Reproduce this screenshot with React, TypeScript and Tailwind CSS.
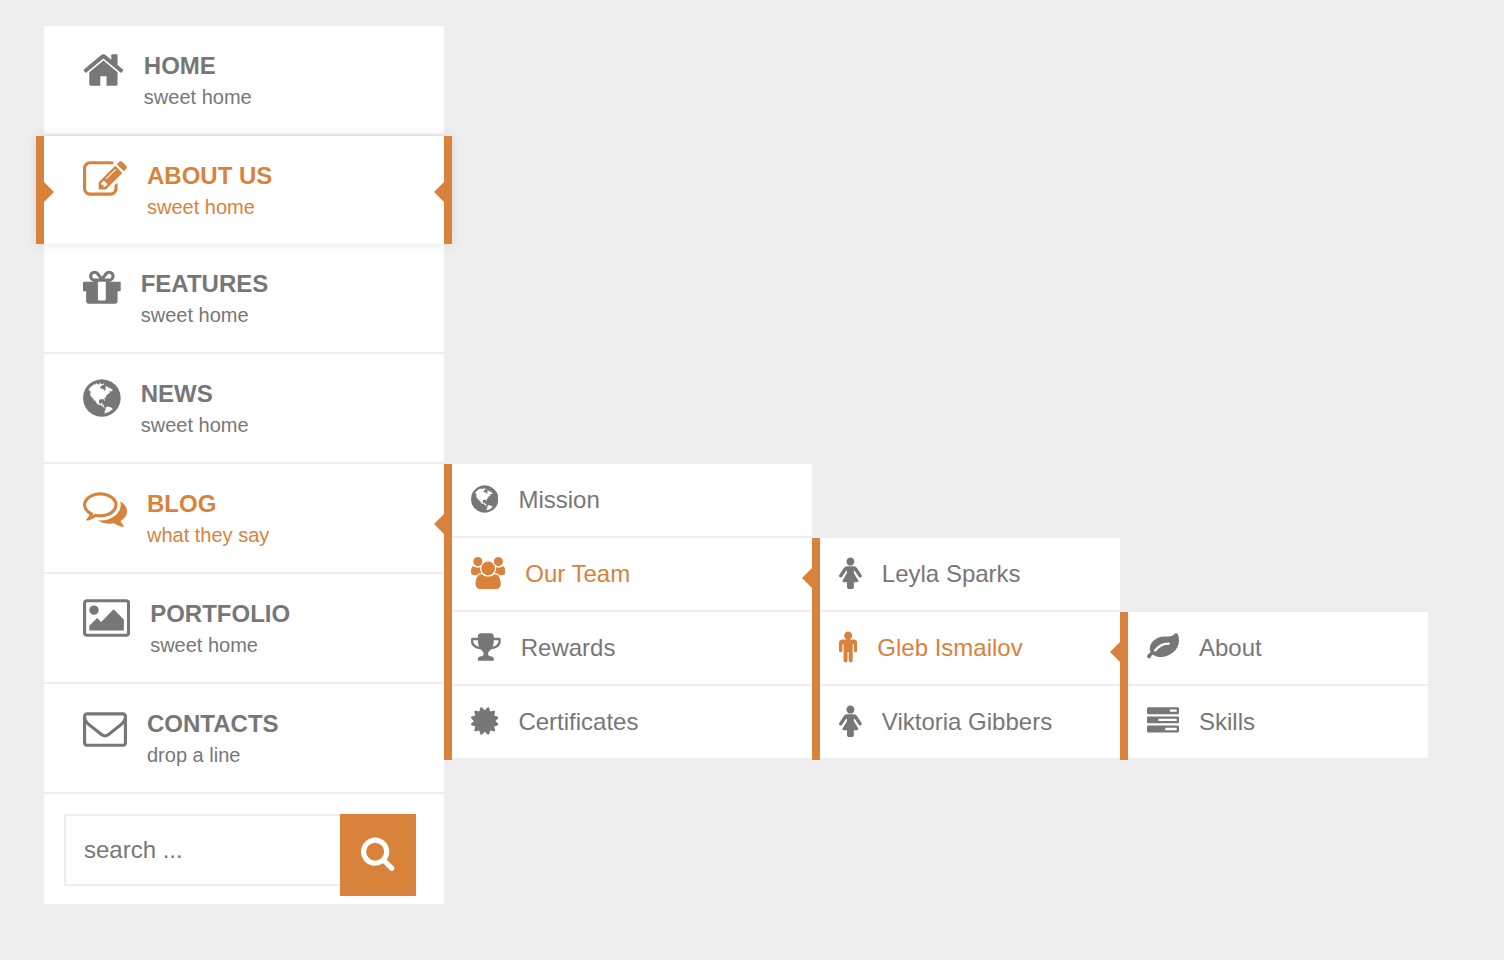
import React from "react";

type Glyph = { x: number; w: number; d: string };

const GLYPHS = {
  home: {
    x: 64,
    w: 1664,
    d: "M1472 992v480q0 26-19 45t-45 19h-384v-384h-256v384h-384q-26 0-45-19t-19-45v-480q0-1 .5-3t.5-3l575-474 575 474q1 2 1 6zm223-69l-62 74q-8 9-21 11h-3q-13 0-21-7l-692-577-692 577q-12 8-24 7-13-2-21-11l-62-74q-8-10-7-23.5t11-21.5l719-599q32-26 76-26t76 26l244 204v-195q0-14 9-23t23-9h192q14 0 23 9t9 23v408l219 182q10 8 11 21.5t-7 23.5z",
  },
  edit: {
    x: 0,
    w: 1792,
    d: "M888 1184l116-116-152-152-116 116v56h96v96h56zm440-720q-16-16-33 1l-350 350q-17 17-1 33t33-1l350-350q17-17 1-33zm80 594v190q0 119-84.5 203.5t-203.5 84.5h-832q-119 0-203.5-84.5t-84.5-203.5v-832q0-119 84.5-203.5t203.5-84.5h832q63 0 117 25 15 7 18 23 3 17-9 29l-49 49q-14 14-32 8-23-6-45-6h-832q-66 0-113 47t-47 113v832q0 66 47 113t113 47h832q66 0 113-47t47-113v-126q0-13 9-22l64-64q15-15 35-7t20 29zm-96-738l288 288-672 672h-288v-288zm444 132l-92 92-288-288 92-92q28-28 68-28t68 28l152 152q28 28 28 68t-28 68z",
  },
  gift: {
    x: 128,
    w: 1536,
    d: "M1056 1356v-716h-320v716q0 25 18 38.5t46 13.5h192q28 0 46-13.5t18-38.5zm-456-844h195l-126-161q-26-31-69-31-40 0-68 28t-28 68 28 68 68 28zm688-96q0-40-28-68t-68-28q-43 0-69 31l-125 161h194q40 0 68-28t28-68zm376 256v320q0 14-9 23t-23 9h-96v416q0 40-28 68t-68 28h-1088q-40 0-68-28t-28-68v-416h-96q-14 0-23-9t-9-23v-320q0-14 9-23t23-9h440q-93 0-158.5-65.5t-65.5-158.5 65.5-158.5 158.5-65.5q107 0 168 77l128 165 128-165q61-77 168-77 93 0 158.5 65.5t65.5 158.5-65.5 158.5-158.5 65.5h440q14 0 23 9t9 23z",
  },
  globe: {
    x: 128,
    w: 1536,
    d: "M896 128q209 0 385.5 103t279.5 279.5 103 385.5-103 385.5-279.5 279.5-385.5 103-385.5-103-279.5-279.5-103-385.5 103-385.5 279.5-279.5 385.5-103zm274 521q-2 1-9.5 9.5t-13.5 9.5q2 0 4.5-5t5-11 3.5-7q6-7 22-15 14-6 52-12 34-8 51 11-2-2 9.5-13t14.5-12q3-2 15-4.5t15-7.5l2-22q-12 1-17.5-7t-6.5-21q0 2-6 8 0-7-4.5-8t-11.5 1-9 1q-10-3-15-7.5t-8-16.5-4-15q-2-5-9.5-10.5t-9.5-10.5q-1-2-2.5-5.5t-3-6.5-4-5.5-5.5-2.5-7 5-7.5 10-4.5 5q-3-2-6-1.5t-4.5 1-4.5 3-5 3.5q-3 2-8.5 3t-8.5 2q15-5-1-11-10-4-16-3 9-4 7.5-12t-8.5-14h5q-1-4-8.5-8.5t-17.5-8.5-13-6q-8-5-34-9.5t-33-.5q-5 6-4.5 10.5t4 14 3.5 12.5q1 6-5.5 13t-6.5 12q0 7 14 15.5t10 21.5q-3 8-16 16t-16 12q-5 8-1.5 18.5t10.5 16.5q2 2 1.5 4t-3.5 4.5-5.5 4-6.5 3.5l-3 2q-11 5-20.5-6t-13.5-26q-7-25-16-30-23-8-29 1-5-13-41-26-25-9-58-4 6-1 0-15-7-15-19-12 3-6 4-17.5t1-13.5q3-13 12-23 1-1 7-8.5t9.5-13.5.5-6q35 4 50-11 5-5 11.5-17t10.5-17q9-6 14-5.5t14.5 5.5 14.5 5q14 1 15.5-11t-7.5-20q12 1 3-17-5-7-8-9-12-4-27 5-8 4 2 8-1-1-9.5 10.5t-16.5 17.5-16-5q-1-1-5.5-13.5t-9.5-13.5q-8 0-16 15 3-8-11-15t-24-8q19-12-8-27-7-4-20.5-5t-19.5 4q-5 7-5.5 11.5t5 8 10.5 5.5 11.5 4 8.5 3q14 10 8 14-2 1-8.5 3.5t-11.5 4.5-6 4q-3 4 0 14t-2 14q-5-5-9-17.5t-7-16.5q7 9-25 6l-10-1q-4 0-16 2t-20.5 1-13.5-8q-4-8 0-20 1-4 4-2-4-3-11-9.5t-10-8.5q-46 15-94 41 6 1 12-1 5-2 13-6.5t10-5.5q34-14 42-7l5-5q14 16 20 25-7-4-30-1-20 6-22 12 7 12 5 18-4-3-11.5-10t-14.5-11-15-5q-16 0-22 1-146 80-235 222 7 7 12 8 4 1 5 9t2.5 11 11.5-3q9 8 3 19 1-1 44 27 19 17 21 21 3 11-10 18-1-2-9-9t-9-4q-3 5 .5 18.5t10.5 12.5q-7 0-9.5 16t-2.5 35.5-1 23.5l2 1q-3 12 5.5 34.5t21.5 19.5q-13 3 20 43 6 8 8 9 3 2 12 7.5t15 10 10 10.5q4 5 10 22.5t14 23.5q-2 6 9.5 20t10.5 23q-1 0-2.5 1t-2.5 1q3 7 15.5 14t15.5 13q1 3 2 10t3 11 8 2q2-20-24-62-15-25-17-29-3-5-5.5-15.5t-4.5-14.5q2 0 6 1.5t8.5 3.5 7.5 4 2 3q-3 7 2 17.5t12 18.5 17 19 12 13q6 6 14 19.5t0 13.5q9 0 20 10.5t17 19.5q5 8 8 26t5 24q2 7 8.5 13.5t12.5 9.5l16 8 13 7q5 2 18.5 10.5t21.5 11.5q10 4 16 4t14.5-2.5 13.5-3.5q15-2 29 15t21 21q36 19 55 11-2 1 .5 7.5t8 15.5 9 14.5 5.5 8.5q5 6 18 15t18 15q6-4 7-9-3 8 7 20t18 10q14-3 14-32-31 15-49-18 0-1-2.5-5.5t-4-8.5-2.5-8.5 0-7.5 5-3q9 0 10-3.5t-2-12.5-4-13q-1-8-11-20t-12-15q-5 9-16 8t-16-9q0 1-1.5 5.5t-1.5 6.5q-13 0-15-1 1-3 2.5-17.5t3.5-22.5q1-4 5.5-12t7.5-14.5 4-12.5-4.5-9.5-17.5-2.5q-19 1-26 20-1 3-3 10.5t-5 11.5-9 7q-7 3-24 2t-24-5q-13-8-22.5-29t-9.5-37q0-10 2.5-26.5t3-25-5.5-24.5q3-2 9-9.5t10-10.5q2-1 4.5-1.5t4.5 0 4-1.5 3-6q-1-1-4-3-3-3-4-3 7 3 28.5-1.5t27.5 1.5q15 11 22-2 0-1-2.5-9.5t-.5-13.5q5 27 29 9 3 3 15.5 5t17.5 5q3 2 7 5.5t5.5 4.5 5-.5 8.5-6.5q10 14 12 24 11 40 19 44 7 3 11 2t4.5-9.5 0-14-1.5-12.5l-1-8v-18l-1-8q-15-3-18.5-12t1.5-18.5 15-18.5q1-1 8-3.5t15.5-6.5 12.5-8q21-19 15-35 7 0 11-9-1 0-5-3t-7.5-5-4.5-2q9-5 2-16 5-3 7.5-11t7.5-10q9 12 21 2 8-8 1-16 5-7 20.5-10.5t18.5-9.5q7 2 8-2t1-12 3-12q4-5 15-9t13-5l17-11q3-4 0-4 18 2 31-11 10-11-6-20 3-6-3-9.5t-15-5.5q3-1 11.5-.5t10.5-1.5q15-10-7-16-17-5-43 12zm-163 877q206-36 351-189-3-3-12.5-4.5t-12.5-3.5q-18-7-24-8 1-7-2.5-13t-8-9-12.5-8-11-7q-2-2-7-6t-7-5.5-7.5-4.5-8.5-2-10 1l-3 1q-3 1-5.5 2.5t-5.5 3-4 3 0 2.5q-21-17-36-22-5-1-11-5.5t-10.5-7-10-1.5-11.5 7q-5 5-6 15t-2 13q-7-5 0-17.5t2-18.5q-3-6-10.5-4.5t-12 4.5-11.5 8.5-9 6.5-8.5 5.5-8.5 7.5q-3 4-6 12t-5 11q-2-4-11.5-6.5t-9.5-5.5q2 10 4 35t5 38q7 31-12 48-27 25-29 40-4 22 12 26 0 7-8 20.5t-7 21.5q0 6 2 16z",
  },
  comments: {
    x: 0,
    w: 1792,
    d: "M704 384q-153 0-286 52t-211.5 141-78.5 191q0 82 53 158t149 132l97 56-35 84q34-20 62-39l44-31 53 10q78 14 153 14 153 0 286-52t211.5-141 78.5-191-78.5-191-211.5-141-286-52zm0-128q191 0 353.5 68.5t256.5 186.5 94 257-94 257-256.5 186.5-353.5 68.5q-86 0-176-16-124 88-278 128-36 9-86 16h-3q-11 0-20.5-8t-11.5-21q-1-3-1-6.5t.5-6.5 2-6l2.5-5 3.5-5.5 4-5 4.5-5 4-4.5q5-6 23-25t26-29.5 22.5-29 25-38.5 20.5-44q-124-72-195-177t-71-224q0-139 94-257t256.5-186.5 353.5-68.5zm822 1169q10 24 20.5 44t25 38.5 22.5 29 26 29.5 23 25q1 1 4 4.5t4.5 5 4 5 3.5 5.5l2.5 5 2 6 .5 6.5-1 6.5q-3 14-13 22t-22 7q-50-7-86-16-154-40-278-128-90 16-176 16-271 0-472-132 58 4 88 4 161 0 309-45t264-129q125-92 192-212t67-254q0-77-23-152 129 71 204 178t75 230q0 120-71 224.5t-195 176.5z",
  },
  picture: {
    x: 64,
    w: 1920,
    d: "M704 576q0 80-56 136t-136 56-136-56-56-136 56-136 136-56 136 56 56 136zm1024 384v448h-1408v-192l320-320 160 160 512-512zm96-704h-1600q-13 0-22.5 9.5t-9.5 22.5v1216q0 13 9.5 22.5t22.5 9.5h1600q13 0 22.5-9.5t9.5-22.5v-1216q0-13-9.5-22.5t-22.5-9.5zm160 32v1216q0 66-47 113t-113 47h-1600q-66 0-113-47t-47-113v-1216q0-66 47-113t113-47h1600q66 0 113 47t47 113z",
  },
  envelope: {
    x: 0,
    w: 1792,
    d: "M1664 1504v-768q-32 36-69 66-268 206-426 338-51 43-83 67t-86.5 48.5-102.5 24.5h-2q-48 0-102.5-24.5t-86.5-48.5-83-67q-158-132-426-338-37-30-69-66v768q0 13 9.5 22.5t22.5 9.5h1472q13 0 22.5-9.5t9.5-22.5zm0-1051v-24.5l-.5-13-3-12.5-5.5-9-9-7.5-14-2.5h-1472q-13 0-22.5 9.5t-9.5 22.5q0 168 147 284 193 152 401 317 6 5 35 29.5t46 37.5 44.5 31.5 50.5 27.5 43 9h2q20 0 43-9t50.5-27.5 44.5-31.5 46-37.5 35-29.5q208-165 401-317 54-43 100.5-115.5t46.5-131.5zm128-37v1088q0 66-47 113t-113 47h-1472q-66 0-113-47t-47-113v-1088q0-66 47-113t113-47h1472q66 0 113 47t47 113z",
  },
  search: {
    x: 64,
    w: 1664,
    d: "M1216 832q0-185-131.5-316.5t-316.5-131.5-316.5 131.5-131.5 316.5 131.5 316.5 316.5 131.5 316.5-131.5 131.5-316.5zm512 832q0 52-38 90t-90 38q-54 0-90-38l-343-342q-179 124-399 124-143 0-273.5-55.5t-225-150-150-225-55.5-273.5 55.5-273.5 150-225 225-150 273.5-55.5 273.5 55.5 225 150 150 225 55.5 273.5q0 220-124 399l343 343q37 37 37 90z",
  },
  users: {
    x: 0,
    w: 1920,
    d: "M593 896q-162 5-265 128h-134q-82 0-138-40.5t-56-118.5q0-353 124-353 6 0 43.5 21t97.5 42.5 119 21.5q67 0 133-23-5 37-5 66 0 139 81 256zm1071 637q0 120-73 189.5t-194 69.5h-874q-121 0-194-69.5t-73-189.5q0-53 3.5-103.5t14-109 26.5-108.5 43-97.5 62-81 85.5-53.5 111.5-20q10 0 43 21.5t73 48 107 48 135 21.5 135-21.5 107-48 73-48 43-21.5q61 0 111.5 20t85.5 53.5 62 81 43 97.5 26.5 108.5 14 109 3.5 103.5zm-1024-1277q0 106-75 181t-181 75-181-75-75-181 75-181 181-75 181 75 75 181zm704 384q0 159-112.5 271.5t-271.5 112.5-271.5-112.5-112.5-271.5 112.5-271.5 271.5-112.5 271.5 112.5 112.5 271.5zm576 225q0 78-56 118.5t-138 40.5h-134q-103-123-265-128 81-117 81-256 0-29-5-66 66 23 133 23 59 0 119-21.5t97.5-42.5 43.5-21q124 0 124 353zm-128-609q0 106-75 181t-181 75-181-75-75-181 75-181 181-75 181 75 75 181z",
  },
  trophy: {
    x: 64,
    w: 1664,
    d: "M522 883q-74-162-74-371h-256v96q0 78 94.5 162t235.5 113zm1078-275v-96h-256q0 209-74 371 141-29 235.5-113t94.5-162zm128-128v128q0 71-41.5 143t-112 130-173 97.5-215.5 44.5q-42 54-95 95-38 34-52.5 72.5t-14.5 89.5q0 54 30.5 91t97.5 37q75 0 133.5 45.5t58.5 114.5v64q0 14-9 23t-23 9h-832q-14 0-23-9t-9-23v-64q0-69 58.5-114.5t133.5-45.5q67 0 97.5-37t30.5-91q0-51-14.5-89.5t-52.5-72.5q-53-41-95-95-113-5-215.5-44.5t-173-97.5-112-130-41.5-143v-128q0-40 28-68t68-28h288v-96q0-66 47-113t113-47h576q66 0 113 47t47 113v96h288q40 0 68 28t28 68z",
  },
  certificate: {
    x: 128,
    w: 1536,
    d: "M1504 896l138 135q30 28 20 70-12 41-52 51l-188 48 53 186q12 41-19 70-29 31-70 19l-186-53-48 188q-10 40-51 52-12 2-19 2-31 0-51-22l-135-138-135 138q-28 30-70 20-41-11-51-52l-48-188-186 53q-41 12-70-19-31-29-19-70l53-186-188-48q-40-10-52-51-10-42 20-70l138-135-138-135q-30-28-20-70 12-41 52-51l188-48-53-186q-12-41 19-70 29-31 70-19l186 53 48-188q10-41 51-51 41-12 70 19l135 139 135-139q29-30 70-19 41 10 51 51l48 188 186-53q41-12 70 19 31 29 19 70l-53 186 188 48q40 10 52 51 10 42-20 70z",
  },
  female: {
    x: 256,
    w: 1280,
    d: "M1536 1056q0 40-28 68t-68 28q-51 0-80-43l-227-341h-45v132l247 411q9 15 9 33 0 26-19 45t-45 19h-192v272q0 46-33 79t-79 33h-160q-46 0-79-33t-33-79v-272h-192q-26 0-45-19t-19-45q0-18 9-33l247-411v-132h-45l-227 341q-29 43-80 43-40 0-68-28t-28-68q0-29 16-53l256-384q73-107 176-107h384q103 0 176 107l256 384q16 24 16 53zm-416-800q0 93-65.5 158.5t-158.5 65.5-158.5-65.5-65.5-158.5 65.5-158.5 158.5-65.5 158.5 65.5 65.5 158.5z",
  },
  male: {
    x: 384,
    w: 1024,
    d: "M1408 672v416q0 40-28 68t-68 28-68-28-28-68v-352h-64v912q0 46-33 79t-79 33-79-33-33-79v-464h-64v464q0 46-33 79t-79 33-79-33-33-79v-912h-64v352q0 40-28 68t-68 28-68-28-28-68v-416q0-80 56-136t136-56h640q80 0 136 56t56 136zm-288-416q0 93-65.5 158.5t-158.5 65.5-158.5-65.5-65.5-158.5 65.5-158.5 158.5-65.5 158.5 65.5 65.5 158.5z",
  },
  leaf: {
    x: 0,
    w: 1792,
    d: "M1280 704q0-26-19-45t-45-19q-172 0-318 49.5t-259.5 134-235.5 219.5q-19 21-19 45 0 26 19 45t45 19q24 0 45-19 27-24 74-71t67-66q137-124 268.5-176t313.5-52q26 0 45-19t19-45zm512-198q0 95-20 193-46 224-184.5 383t-357.5 268q-214 108-438 108-148 0-286-47-15-5-88-42t-96-37q-16 0-39.5 32t-45 70-52.5 70-60 32q-43 0-63.5-17.5t-45.5-59.5q-2-4-6-11t-5.5-10-3-9.5-1.5-13.5q0-35 31-73.5t68-65.5 68-56 31-48q0-4-14-38t-16-44q-9-51-9-104 0-115 43.5-220t119-184.5 170.5-139 204-95.5q55-18 145-25.5t179.5-9 178.5-6 163.5-24 113.5-56.5l29.5-29.5 29.5-28 27-20 36.5-16 43.5-4.5q39 0 70.5 46t47.5 112 24 124 8 96z",
  },
  tasks: {
    x: 0,
    w: 1792,
    d: "M1024 1408h640v-128h-640v128zm-384-512h1024v-128h-1024v128zm640-512h384v-128h-384v128zm512 832v256q0 26-19 45t-45 19h-1664q-26 0-45-19t-19-45v-256q0-26 19-45t45-19h1664q26 0 45 19t19 45zm0-512v256q0 26-19 45t-45 19h-1664q-26 0-45-19t-19-45v-256q0-26 19-45t45-19h1664q26 0 45 19t19 45zm0-512v256q0 26-19 45t-45 19h-1664q-26 0-45-19t-19-45v-256q0-26 19-45t45-19h1664q26 0 45 19t19 45z",
  },
} satisfies Record<string, Glyph>;

type IconName = keyof typeof GLYPHS;

function Icon({ name, className }: { name: IconName; className: string }) {
  const g = GLYPHS[name];
  return (
    <svg
      viewBox={`${g.x} 0 ${g.w} 1792`}
      className={`w-auto shrink-0 fill-current ${className}`}
      aria-hidden="true"
    >
      <path d={g.d} />
    </svg>
  );
}

type Item = {
  icon: IconName;
  label: string;
  active?: boolean;
  width?: string;
  children?: Item[];
};

type MainItem = Item & { note: string; raised?: boolean };

const MENU: MainItem[] = [
  { icon: "home", label: "HOME", note: "sweet home" },
  { icon: "edit", label: "ABOUT US", note: "sweet home", active: true, raised: true },
  { icon: "gift", label: "FEATURES", note: "sweet home" },
  { icon: "globe", label: "NEWS", note: "sweet home" },
  {
    icon: "comments",
    label: "BLOG",
    note: "what they say",
    active: true,
    width: "w-[368px]",
    children: [
      { icon: "globe", label: "Mission" },
      {
        icon: "users",
        label: "Our Team",
        active: true,
        width: "w-[308px]",
        children: [
          { icon: "female", label: "Leyla Sparks" },
          {
            icon: "male",
            label: "Gleb Ismailov",
            active: true,
            width: "w-[308px]",
            children: [
              { icon: "leaf", label: "About" },
              { icon: "tasks", label: "Skills" },
            ],
          },
          { icon: "female", label: "Viktoria Gibbers" },
        ],
      },
      { icon: "trophy", label: "Rewards" },
      { icon: "certificate", label: "Certificates" },
    ],
  },
  { icon: "picture", label: "PORTFOLIO", note: "sweet home" },
  { icon: "envelope", label: "CONTACTS", note: "drop a line" },
];

function Arrow({ className }: { className: string }) {
  return <span className={`absolute border-y-10 border-y-transparent ${className}`} />;
}

function SubMenu({ items, width }: { items: Item[]; width?: string }) {
  return (
    <ul className={`absolute left-full top-0 border-l-8 border-[#d9823b] ${width ?? ""}`}>
      {items.map((item) => (
        <li key={item.label} className="relative">
          <a
            href="#"
            className={`flex h-[74px] items-center gap-5 border-b-2 border-[#eee] bg-white pl-[19px] text-2xl ${
              item.active ? "text-[#d9823b]" : "text-[#777]"
            }`}
          >
            <Icon name={item.icon} className="h-8 -mt-0.5" />
            {item.label}
          </a>
          {item.children && (
            <>
              <Arrow className="right-0 top-[30px] border-r-10 border-r-[#d9823b]" />
              <SubMenu items={item.children} width={item.width} />
            </>
          )}
        </li>
      ))}
    </ul>
  );
}

function MainEntry({ item }: { item: MainItem }) {
  const frame = item.raised
    ? "-mx-2 border-x-8 border-[#d9823b] shadow-[0_0_10px_rgba(0,0,0,0.1)]"
    : "border-b-2 border-[#eee]";
  return (
    <li className={`relative ${item.raised ? "z-10" : ""}`}>
      <a
        href="#"
        className={`flex items-start gap-5 bg-white py-[22px] pl-[39px] group-first:rounded-t ${frame} ${
          item.active ? "text-[#d9823b]" : "text-[#777]"
        }`}
      >
        <Icon name={item.icon} className="h-11" />
        <span className="flex flex-col pt-0.5">
          <span className="text-2xl font-bold">{item.label}</span>
          <span className="text-xl leading-[30px]">{item.note}</span>
        </span>
      </a>
      {item.raised && (
        <>
          <Arrow className="left-0 top-[46px] border-l-10 border-l-[#d9823b]" />
          <Arrow className="right-0 top-[46px] border-r-10 border-r-[#d9823b]" />
        </>
      )}
      {item.children && (
        <>
          <Arrow className="right-0 top-[50px] border-r-10 border-r-[#d9823b]" />
          <SubMenu items={item.children} width={item.width} />
        </>
      )}
    </li>
  );
}

export default function App() {
  return (
    <div className="min-h-screen bg-[#eee] px-11 py-[26px] font-['Liberation_Sans',Arial,sans-serif]">
      <nav className="w-[400px] rounded-t bg-white" aria-label="Main">
        <ul>
          {MENU.map((item) => (
            <MainEntry key={item.label} item={item} />
          ))}
        </ul>
        <form
          className="flex items-start pb-2 pl-5 pr-7 pt-5"
          onSubmit={(event) => event.preventDefault()}
        >
          <input
            type="text"
            aria-label="Search"
            placeholder="search ..."
            className="h-[72px] min-w-0 flex-1 border-2 border-r-0 border-[#eee] bg-white pl-[18px] text-2xl text-[#777] outline-none placeholder:text-[#777]"
          />
          <button
            type="submit"
            aria-label="Submit search"
            className="flex h-[82px] w-[76px] items-center justify-center bg-[#d9823b] pb-1 text-white"
          >
            <Icon name="search" className="h-9" />
          </button>
        </form>
      </nav>
    </div>
  );
}
